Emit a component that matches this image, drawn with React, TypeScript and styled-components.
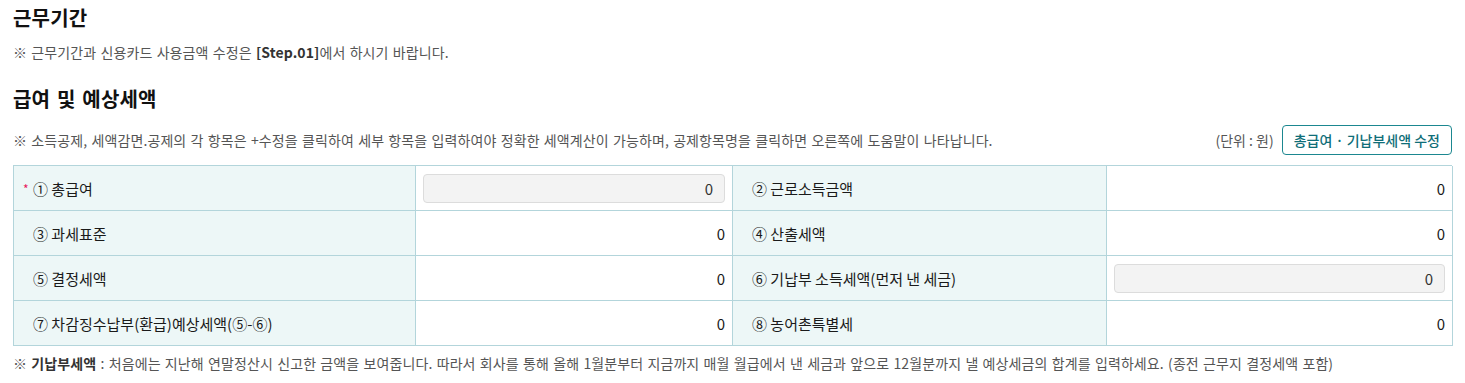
import React from "react";
import styled, { createGlobalStyle } from "styled-components";

const Global = createGlobalStyle`
  html, body { margin: 0; padding: 0; background: #fff; }
  body { font-family: "Noto Sans CJK KR", "Noto Sans", sans-serif; color: #222; }
  * { box-sizing: border-box; }
`;

const Page = styled.div`
  padding: 4px 13px 0 13px;
  display: flex;
  flex-direction: column;
`;

const Title = styled.h2<{ $top?: number }>`
  margin: ${(p) => p.$top ?? 0}px 0 0 0;
  font-size: 20px;
  font-weight: 700;
  line-height: 28px;
  color: #111;
  letter-spacing: 0.2px;
  word-spacing: 2px;
`;

const Note = styled.p<{ $top?: number }>`
  margin: ${(p) => p.$top ?? 0}px 0 0 0;
  font-size: 14px;
  line-height: 20px;
  color: #555;
  letter-spacing: 0.1px;
  word-spacing: 1px;
  white-space: nowrap;
  b { color: #333; font-weight: 700; }
`;

const NoteBar = styled.div`
  margin-top: 12px;
  display: flex;
  align-items: center;
  justify-content: space-between;
  height: 30px;
`;

const UnitBox = styled.div`
  display: flex;
  align-items: center;
  gap: 8px;
  font-size: 14px;
  color: #555;
`;

const EditButton = styled.button`
  height: 30px;
  padding: 0 11px;
  border: 1px solid #1b8790;
  border-radius: 4px;
  background: #fff;
  color: #0f6e78;
  font-family: inherit;
  font-size: 14px;
  font-weight: 500;
  cursor: pointer;
`;

const Grid = styled.div`
  margin-top: 10px;
  display: grid;
  grid-template-columns: 402px 317px 374px 346px;
  grid-auto-rows: 45px;
  border-top: 1px solid #b3d5db;
  border-left: 1px solid #b3d5db;
`;

const Label = styled.div`
  display: flex;
  align-items: center;
  padding-left: 9px;
  background: #edf7f7;
  border-right: 1px solid #b3d5db;
  border-bottom: 1px solid #b3d5db;
  font-size: 15px;
  color: #1a1a1a;
  white-space: nowrap;
`;

const Star = styled.span<{ $on?: boolean }>`
  display: inline-block;
  width: 10px;
  color: #e8175d;
  font-size: 12px;
  visibility: ${(p) => (p.$on ? "visible" : "hidden")};
`;

const Value = styled.div`
  display: flex;
  align-items: center;
  justify-content: flex-end;
  padding: 0 7px;
  background: #fff;
  border-right: 1px solid #b3d5db;
  border-bottom: 1px solid #b3d5db;
  font-size: 15px;
  color: #1a1a1a;
`;

const InputBox = styled.div`
  flex: 1;
  height: 29px;
  display: flex;
  align-items: center;
  justify-content: flex-end;
  padding: 0 11px;
  background: #f3f3f3;
  border: 1px solid #dcdcdc;
  border-radius: 4px;
  font-size: 15px;
  color: #333;
`;

type Cell = { label: string; req?: boolean; input?: boolean };

const rows: [Cell, Cell][] = [
  [{ label: "① 총급여", req: true, input: true }, { label: "② 근로소득금액" }],
  [{ label: "③ 과세표준" }, { label: "④ 산출세액" }],
  [{ label: "⑤ 결정세액" }, { label: "⑥ 기납부 소득세액(먼저 낸 세금)", input: true }],
  [{ label: "⑦ 차감징수납부(환급)예상세액(⑤-⑥)" }, { label: "⑧ 농어촌특별세" }],
];

export default function App() {
  return (
    <>
      <Global />
      <Page>
        <Title>근무기간</Title>
        <Note $top={10}>
          ※ 근무기간과 신용카드 사용금액 수정은 <b>[Step.01]</b>에서 하시기 바랍니다.
        </Note>
        <Title $top={23}>급여 및 예상세액</Title>
        <NoteBar>
          <Note>
            ※ 소득공제, 세액감면.공제의 각 항목은 +수정을 클릭하여 세부 항목을 입력하여야 정확한 세액계산이 가능하며, 공제항목명을 클릭하면 오른쪽에 도움말이 나타납니다.
          </Note>
          <UnitBox>
            <span>(단위 : 원)</span>
            <EditButton>총급여 · 기납부세액 수정</EditButton>
          </UnitBox>
        </NoteBar>
        <Grid>
          {rows.map((r, i) =>
            r.map((c, j) => (
              <React.Fragment key={`${i}-${j}`}>
                <Label>
                  <Star $on={c.req}>*</Star>
                  {c.label}
                </Label>
                <Value>{c.input ? <InputBox>0</InputBox> : "0"}</Value>
              </React.Fragment>
            ))
          )}
        </Grid>
        <Note $top={7}>
          ※ <b>기납부세액</b> : 처음에는 지난해 연말정산시 신고한 금액을 보여줍니다. 따라서 회사를 통해 올해 1월분부터 지금까지 매월 월급에서 낸 세금과 앞으로 12월분까지 낼 예상세금의 합계를 입력하세요. (종전 근무지 결정세액 포함)
        </Note>
      </Page>
    </>
  );
}
